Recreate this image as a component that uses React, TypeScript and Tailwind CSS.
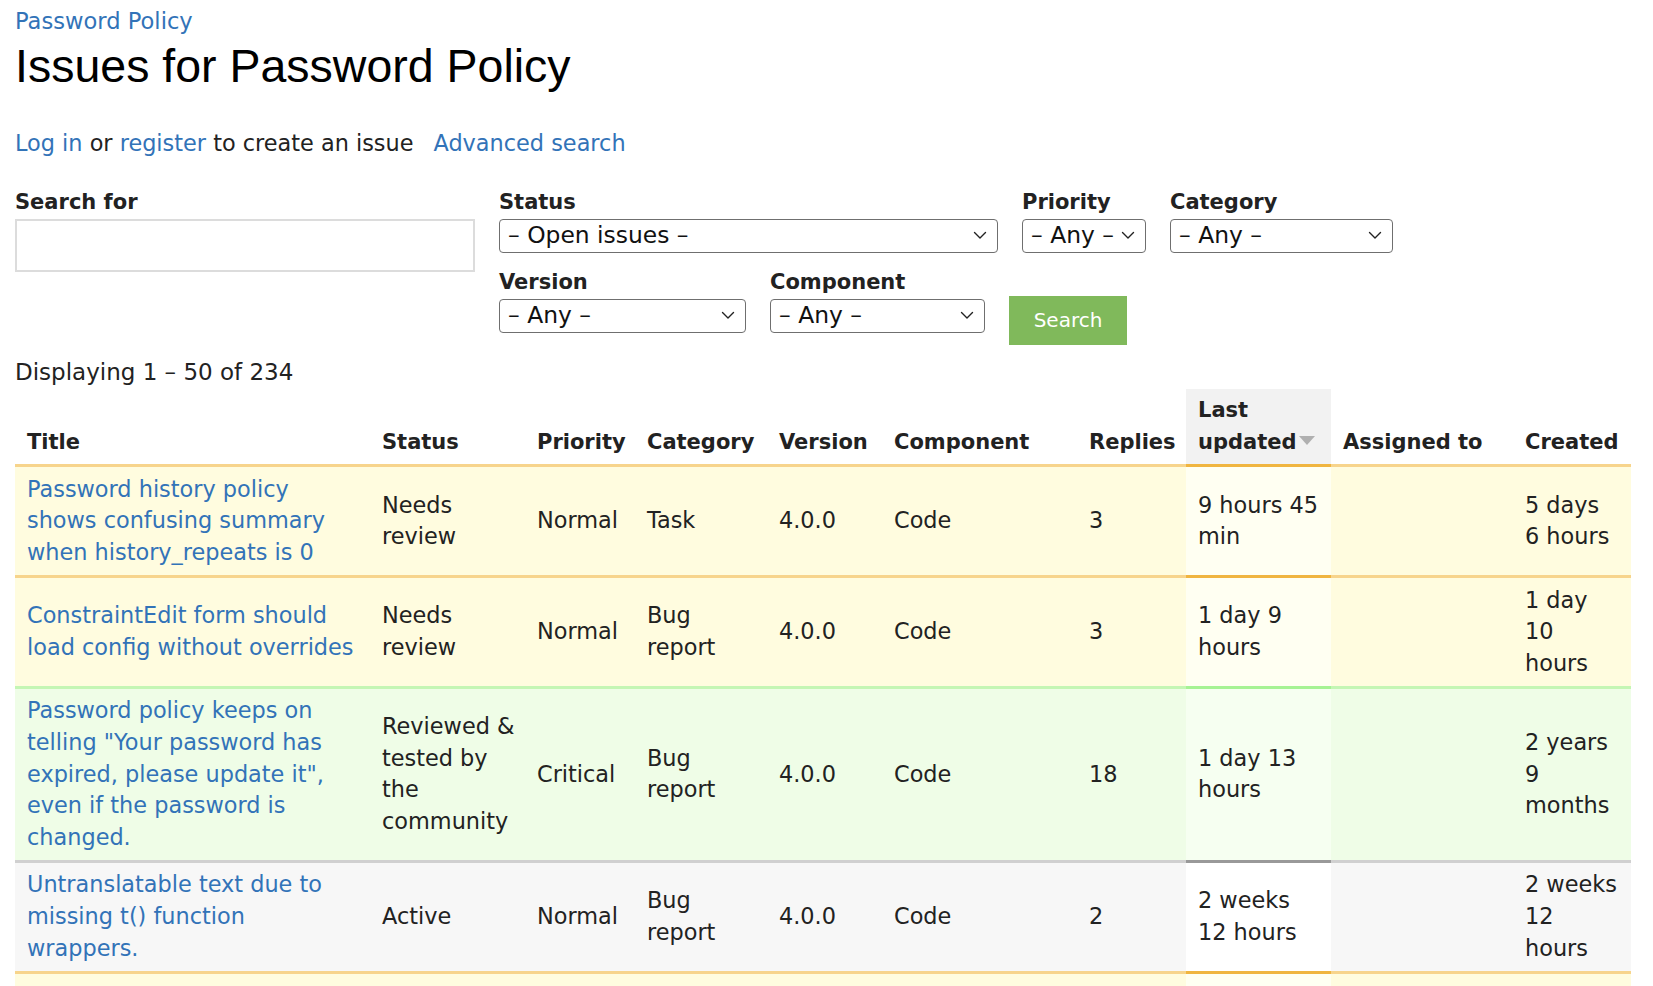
import React from 'react';

type RowState = 'review' | 'rtbc' | 'active';

interface Issue {
    state: RowState;
    title: string[];
    status: string[];
    priority: string;
    category: string[];
    version: string;
    component: string;
    replies: string;
    updated: string[];
    assigned: string;
    created: string[];
}

const issues: Issue[] = [
    {
        state: 'review',
        title: ['Password history policy', 'shows confusing summary', 'when history_repeats is 0'],
        status: ['Needs', 'review'],
        priority: 'Normal',
        category: ['Task'],
        version: '4.0.0',
        component: 'Code',
        replies: '3',
        updated: ['9 hours 45', 'min'],
        assigned: '',
        created: ['5 days', '6 hours'],
    },
    {
        state: 'review',
        title: ['ConstraintEdit form should', 'load config without overrides'],
        status: ['Needs', 'review'],
        priority: 'Normal',
        category: ['Bug', 'report'],
        version: '4.0.0',
        component: 'Code',
        replies: '3',
        updated: ['1 day 9', 'hours'],
        assigned: '',
        created: ['1 day', '10', 'hours'],
    },
    {
        state: 'rtbc',
        title: [
            'Password policy keeps on',
            'telling "Your password has',
            'expired, please update it",',
            'even if the password is',
            'changed.',
        ],
        status: ['Reviewed &', 'tested by', 'the', 'community'],
        priority: 'Critical',
        category: ['Bug', 'report'],
        version: '4.0.0',
        component: 'Code',
        replies: '18',
        updated: ['1 day 13', 'hours'],
        assigned: '',
        created: ['2 years', '9', 'months'],
    },
    {
        state: 'active',
        title: ['Untranslatable text due to', 'missing t() function', 'wrappers.'],
        status: ['Active'],
        priority: 'Normal',
        category: ['Bug', 'report'],
        version: '4.0.0',
        component: 'Code',
        replies: '2',
        updated: ['2 weeks', '12 hours'],
        assigned: '',
        created: ['2 weeks', '12', 'hours'],
    },
];

// colores de fila según estado del issue (celda normal / columna ordenada)
const stateStyles: Record<RowState, { cell: string; sorted: string }> = {
    review: {
        cell: 'bg-[#fffcdf] border-t-[#f7d48c]',
        sorted: 'bg-[#fffff2] border-t-[#f0b540]',
    },
    rtbc: {
        cell: 'bg-[#effde7] border-t-[#c4f6b4]',
        sorted: 'bg-[#f6fff1] border-t-[#a6f394]',
    },
    active: {
        cell: 'bg-[#f7f7f7] border-t-[#d0d0d0]',
        sorted: 'bg-white border-t-[#999999]',
    },
};

const Lines = ({ lines }: { lines: string[] }) => (
    <>
        {lines.map((line, i) => (
            <React.Fragment key={i}>
                {i > 0 && <br />}
                {line}
            </React.Fragment>
        ))}
    </>
);

const Chevron = () => (
    <svg width="14" height="9" viewBox="0 0 14 9" fill="none" className="shrink-0">
        <polyline points="1.5,1.5 7,7 12.5,1.5" stroke="#222" strokeWidth="1.4" strokeLinecap="round" strokeLinejoin="round" />
    </svg>
);

const FakeSelect = ({ value, className }: { value: string; className: string }) => (
    <div
        className={`flex h-[34px] items-center justify-between rounded-[4px] border border-[#6f6f6f] bg-white pl-[8px] pr-[10px] text-[23.4px] leading-none text-[#111] ${className}`}
    >
        <span>{value}</span>
        <Chevron />
    </div>
);

const Field = ({ label, children }: { label: string; children: React.ReactNode }) => (
    <div className="flex flex-col">
        <label className="mb-[4px] text-[21px] font-bold leading-[26px] text-[#222]">{label}</label>
        {children}
    </div>
);

const headers = [
    'Title',
    'Status',
    'Priority',
    'Category',
    'Version',
    'Component',
    'Replies',
    'Last updated',
    'Assigned to',
    'Created',
];

export default function App() {
    return (
        <div
            className="min-h-screen bg-white pl-[15px] text-[#222]"
            style={{ fontFamily: '"DejaVu Sans", "Noto Sans", sans-serif' }}
        >
            <div className="pt-[7px]">
                <a className="text-[22.6px] leading-[28px] text-[#3273b8]">Password Policy</a>
            </div>
            <h1
                className="mt-[4px] text-[46.5px] font-normal leading-[52px] text-black"
                style={{ fontFamily: '"Liberation Sans", Arial, sans-serif' }}
            >
                Issues for Password Policy
            </h1>

            <div className="mt-[36px] flex text-[22.4px] leading-[31.6px]">
                <p>
                    <a className="text-[#3273b8]">Log in</a> or <a className="text-[#3273b8]">register</a> to create an
                    issue
                </p>
                <a className="ml-[20px] text-[#3273b8]">Advanced search</a>
            </div>

            {/* formulario de búsqueda */}
            <div className="mt-[29px] flex gap-x-[24px]">
                <Field label="Search for">
                    <input className="h-[53px] w-[460px] border-2 border-[#dcdcdc] bg-white px-2 text-[22px] outline-none" />
                </Field>
                <div className="flex flex-col gap-y-[16px]">
                    <div className="flex gap-x-[24px]">
                        <Field label="Status">
                            <FakeSelect value="– Open issues –" className="w-[499px]" />
                        </Field>
                        <Field label="Priority">
                            <FakeSelect value="– Any –" className="w-[124px]" />
                        </Field>
                        <Field label="Category">
                            <FakeSelect value="– Any –" className="w-[223px]" />
                        </Field>
                    </div>
                    <div className="flex gap-x-[24px]">
                        <Field label="Version">
                            <FakeSelect value="– Any –" className="w-[247px]" />
                        </Field>
                        <Field label="Component">
                            <FakeSelect value="– Any –" className="w-[215px]" />
                        </Field>
                        <div className="pt-[27px]">
                            <button className="flex h-[49px] w-[118px] items-center justify-center bg-[#80b95b] text-[20px] text-white">
                                Search
                            </button>
                        </div>
                    </div>
                </div>
            </div>

            <p className="mt-[12px] text-[23px] leading-[31.6px]">Displaying 1 – 50 of 234</p>

            <table className="mt-[1px] w-[1616px] table-fixed border-separate border-spacing-0 text-[22.4px] leading-[31.6px]">
                <colgroup>
                    <col className="w-[355px]" />
                    <col className="w-[155px]" />
                    <col className="w-[110px]" />
                    <col className="w-[132px]" />
                    <col className="w-[115px]" />
                    <col className="w-[195px]" />
                    <col className="w-[109px]" />
                    <col className="w-[145px]" />
                    <col className="w-[182px]" />
                    <col className="w-[118px]" />
                </colgroup>
                <thead>
                    <tr>
                        {headers.map((h, i) => (
                            <th
                                key={h}
                                className={`pb-[6px] pl-[12px] pt-[6px] text-left align-bottom text-[21px] font-bold leading-[31.6px] text-[#222] ${
                                    i === 7 ? 'bg-[#f2f2f2]' : ''
                                }`}
                            >
                                {i === 7 ? (
                                    <>
                                        Last
                                        <br />
                                        updated
                                        <svg width="16" height="10" viewBox="0 0 16 10" className="mb-[3px] ml-[2px] inline-block">
                                            <polygon points="0,0 16,0 8,9" fill="#b0b0b0" />
                                        </svg>
                                    </>
                                ) : (
                                    h
                                )}
                            </th>
                        ))}
                    </tr>
                </thead>
                <tbody>
                    {issues.map((issue, r) => {
                        const s = stateStyles[issue.state];
                        const cells: React.ReactNode[] = [
                            <a className="text-[#3273b8]">
                                <Lines lines={issue.title} />
                            </a>,
                            <Lines lines={issue.status} />,
                            issue.priority,
                            <Lines lines={issue.category} />,
                            issue.version,
                            issue.component,
                            issue.replies,
                            <Lines lines={issue.updated} />,
                            issue.assigned,
                            <Lines lines={issue.created} />,
                        ];
                        return (
                            <tr key={r}>
                                {cells.map((c, i) => (
                                    <td
                                        key={i}
                                        className={`whitespace-nowrap border-t-[3px] border-solid pb-[6.5px] pl-[12px] pt-[6.5px] align-middle ${
                                            i === 7 ? s.sorted : s.cell
                                        }`}
                                    >
                                        {c}
                                    </td>
                                ))}
                            </tr>
                        );
                    })}
                    {/* siguiente fila (queda cortada por el borde de la ventana) */}
                    <tr>
                        {headers.map((h, i) => (
                            <td
                                key={h}
                                className={`h-[60px] border-t-[3px] border-solid ${
                                    i === 7 ? stateStyles.review.sorted : stateStyles.review.cell
                                }`}
                            />
                        ))}
                    </tr>
                </tbody>
            </table>
        </div>
    );
}
